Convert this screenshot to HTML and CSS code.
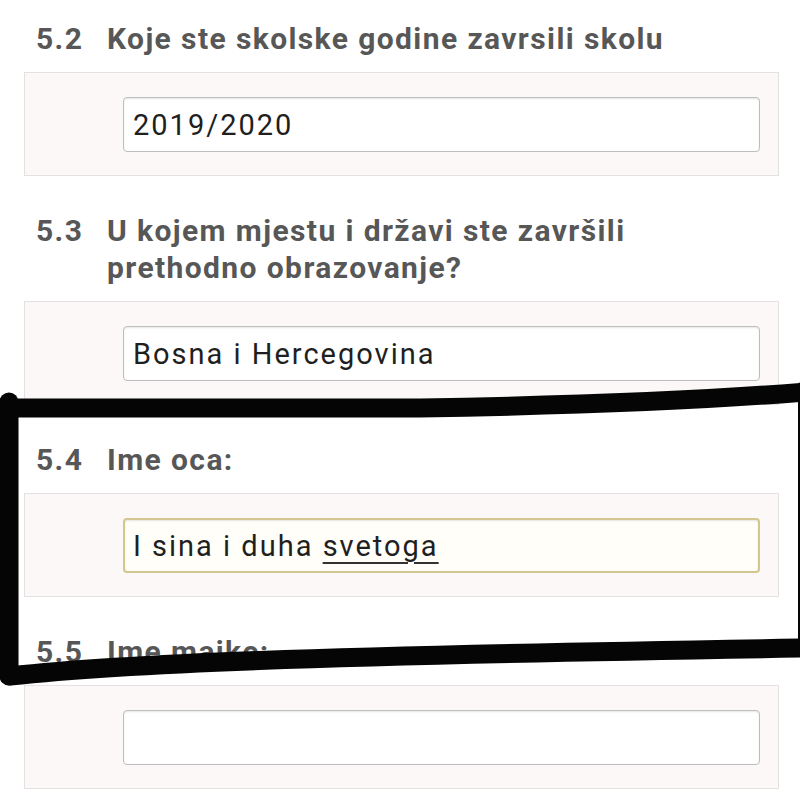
FILE: index.html
```html
<!DOCTYPE html>
<html lang="bs">
<head>
<meta charset="utf-8">
<title>Upitnik</title>
<link rel="stylesheet" href="styles.css">
</head>
<body>
<main class="form">
  <section class="question">
    <h2 class="q-head"><span class="q-num">5.2</span><span class="q-title">Koje ste skolske godine zavrsili skolu</span></h2>
    <div class="panel"><div class="field"><span class="value">2019/2020</span></div></div>
  </section>
  <section class="question">
    <h2 class="q-head"><span class="q-num">5.3</span><span class="q-title">U kojem mjestu i državi ste završili prethodno obrazovanje?</span></h2>
    <div class="panel"><div class="field"><span class="value">Bosna i Hercegovina</span></div></div>
  </section>
  <section class="question">
    <h2 class="q-head"><span class="q-num">5.4</span><span class="q-title">Ime oca:</span></h2>
    <div class="panel"><div class="field field-focus"><span class="value">I sina i duha <span class="spell">svetoga</span></span></div></div>
  </section>
  <section class="question">
    <h2 class="q-head"><span class="q-num">5.5</span><span class="q-title">Ime majke:</span></h2>
    <div class="panel"><div class="field"></div></div>
  </section>
</main>
<svg class="marker" width="800" height="800" viewBox="0 0 800 800" aria-hidden="true">
  <path d="M 0 408 L 420 408 C 600 405 720 399 805 392" />
  <path d="M 9 402 L 9 676" />
  <path class="thin" d="M 802 386 L 802 650" />
  <path d="M 10 676 C 120 664 300 656 805 648" />
</svg>
</body>
</html>
```
FILE: styles.css
```css
html, body {
  margin: 0;
  padding: 0;
  background: #ffffff;
  overflow: hidden;
}
body {
  position: relative;
  width: 800px;
  height: 800px;
  font-family: Roboto, "Noto Sans", "Liberation Sans", sans-serif;
}
.form {
  padding: 20px 21px 0 24px;
  display: flex;
  flex-direction: column;
  gap: 36px;
}
.question {
  display: flex;
  flex-direction: column;
  gap: 15px;
}
.q-head {
  margin: 0;
  padding: 0 20px 0 12px;
  display: grid;
  grid-template-columns: 71px 1fr;
  font-size: 30px;
  line-height: 37px;
  font-weight: 700;
  letter-spacing: 1.4px;
  color: #575757;
}
.panel {
  box-sizing: border-box;
  height: 104px;
  border: 1px solid #e4e1e1;
  background: #fbf8f7;
  padding: 24px 18px 23px 98px;
}
.field {
  box-sizing: border-box;
  height: 55px;
  border: 1px solid #bebebe;
  border-radius: 4px;
  background: #ffffff;
  box-shadow: inset 0 1px 2px rgba(0, 0, 0, 0.10);
  display: flex;
  align-items: center;
  padding-left: 9px;
  font-size: 29px;
  letter-spacing: 2px;
  color: #1f1f1f;
  white-space: nowrap;
}
.field-focus {
  border: 2px solid #d3c68e;
  padding-left: 8px;
  background: #fffef9;
}
.spell {
  text-decoration: underline;
  text-decoration-thickness: 2px;
  text-underline-offset: 6px;
  text-decoration-color: #333333;
}
.marker {
  position: absolute;
  top: 0;
  left: 0;
  pointer-events: none;
}
.marker path {
  fill: none;
  stroke: #050505;
  stroke-width: 19;
  stroke-linecap: round;
  stroke-linejoin: round;
}
.marker path.thin {
  stroke-width: 8;
}
```
